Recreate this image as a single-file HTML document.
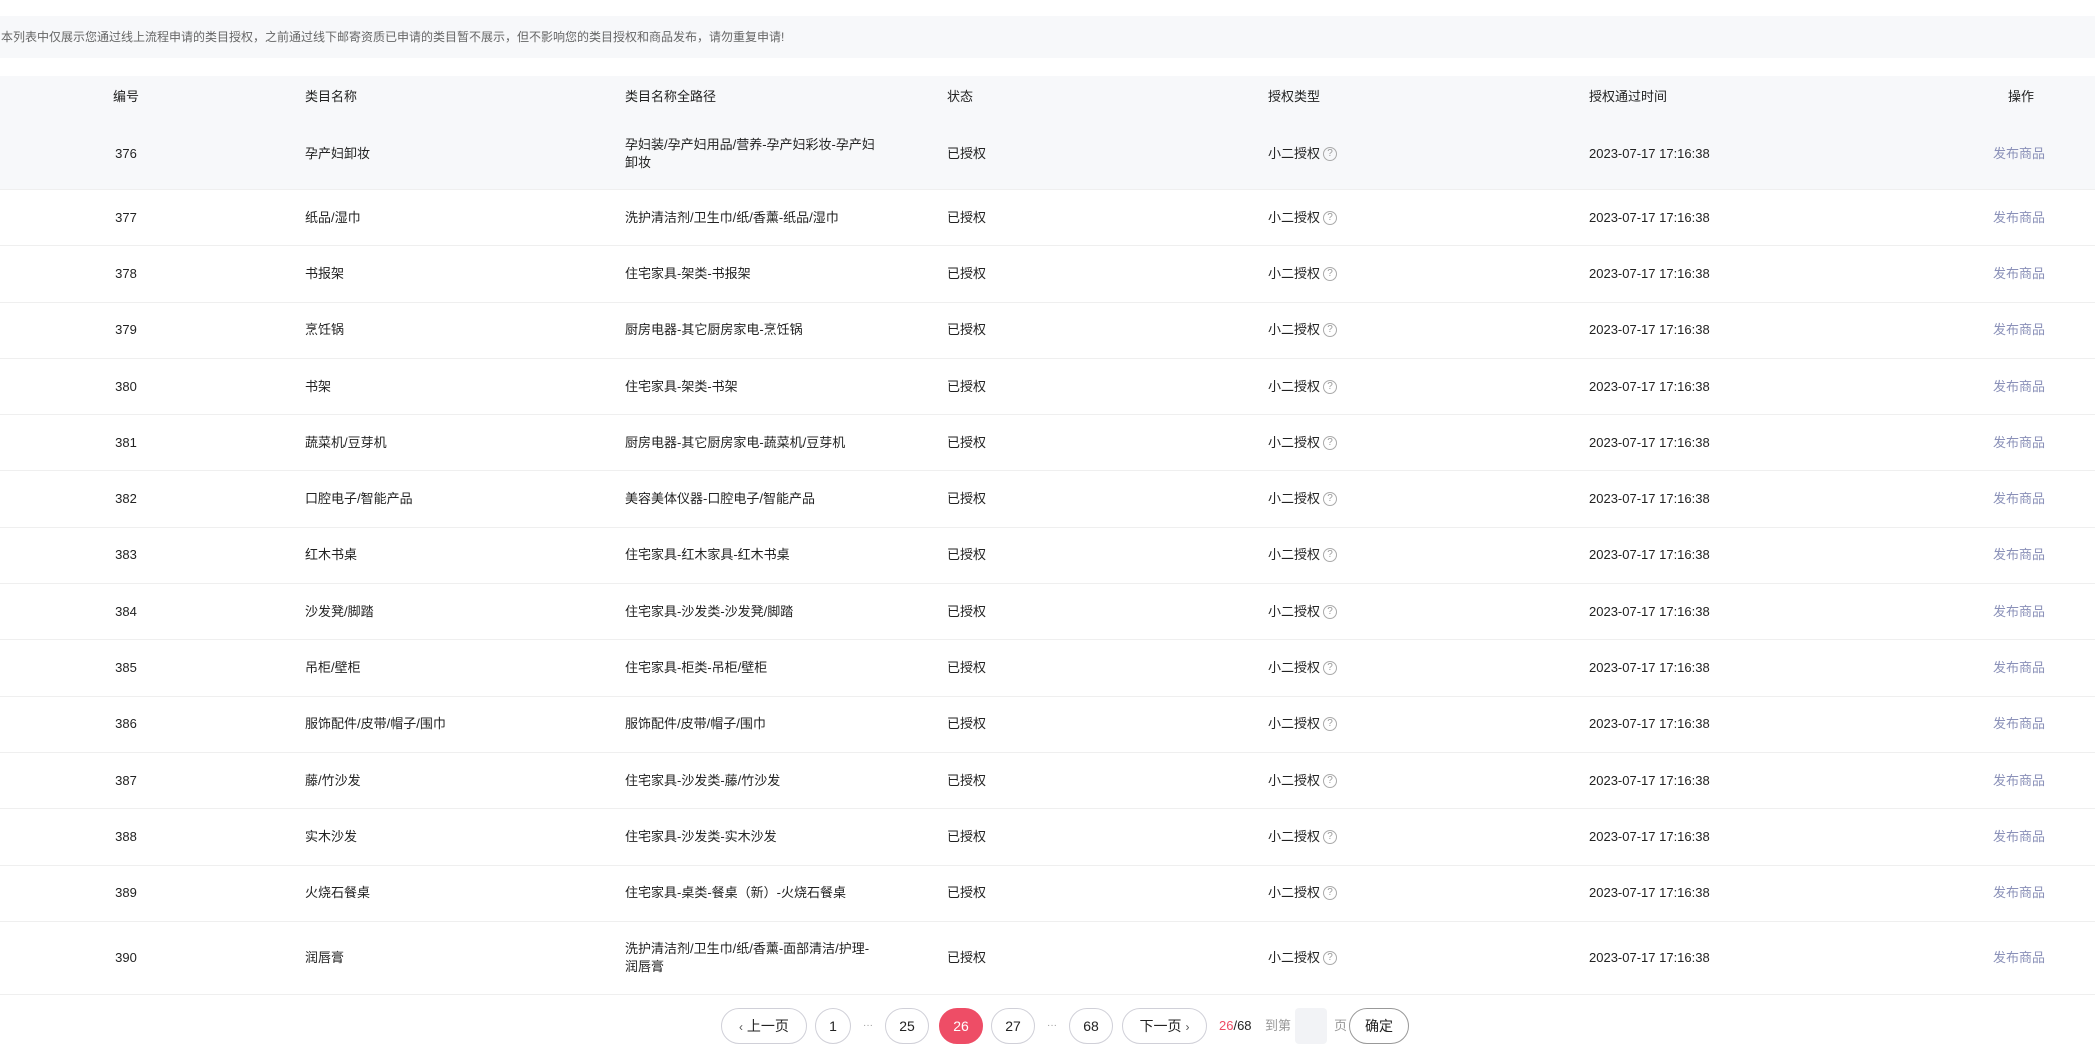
<!DOCTYPE html>
<html><head><meta charset="utf-8"><style>
*{margin:0;padding:0;box-sizing:border-box}
body{width:2095px;height:1050px;background:#fff;font-family:"Liberation Sans","Noto Sans CJK SC",sans-serif;color:#222;position:relative;overflow:hidden;font-size:13px}
.notice{position:absolute;left:0;top:16px;width:2095px;height:42px;background:#f7f8fa;font-size:12px;color:#666;line-height:42px;padding-left:1px}
.hdr{position:absolute;left:0;top:76px;width:2095px;height:42px;background:#f7f8fa}
.row{position:absolute;left:0;width:2095px;border-bottom:1px solid #efefef}
.c{position:absolute;top:50%;transform:translateY(-50%);line-height:18px;white-space:nowrap}
.n{left:96px;width:60px;text-align:center}
.a{left:305px}.b{left:625px}.s{left:947px}.t{left:1268px;display:flex;align-items:center}.d{left:1589px}
.op{left:1993px;color:#8a90b8}
.hop{left:2008px}
.q{display:inline-block;width:14px;height:14px;border:1px solid #aaa;border-radius:50%;font-size:10px;line-height:12px;text-align:center;color:#999;margin-left:3px}
.pg{position:absolute;top:1008px;height:36px;border:1px solid #d0d0d8;border-radius:18px;text-align:center;line-height:34px;font-size:14px;background:#fff}
.dots{position:absolute;top:1020px;color:#999;font-size:10px;line-height:12px}
.lbl{position:absolute;top:1017px;font-size:13px;line-height:18px}
</style></head><body>
<div class="notice">本列表中仅展示您通过线上流程申请的类目授权，之前通过线下邮寄资质已申请的类目暂不展示，但不影响您的类目授权和商品发布，请勿重复申请!</div>
<div class="hdr">
<div class="c n">编号</div><div class="c a">类目名称</div><div class="c b">类目名称全路径</div><div class="c s">状态</div><div class="c t">授权类型</div><div class="c d">授权通过时间</div><div class="c hop">操作</div>
</div>
<div class="row" style="top:118px;height:72px;background:#f7f8fa"><div class="c n">376</div><div class="c a">孕产妇卸妆</div><div class="c b">孕妇装/孕产妇用品/营养-孕产妇彩妆-孕产妇<br>卸妆</div><div class="c s">已授权</div><div class="c t">小二授权<span class="q">?</span></div><div class="c d">2023-07-17 17:16:38</div><div class="c op">发布商品</div></div>
<div class="row" style="top:190px;height:56.3px"><div class="c n">377</div><div class="c a">纸品/湿巾</div><div class="c b">洗护清洁剂/卫生巾/纸/香薰-纸品/湿巾</div><div class="c s">已授权</div><div class="c t">小二授权<span class="q">?</span></div><div class="c d">2023-07-17 17:16:38</div><div class="c op">发布商品</div></div>
<div class="row" style="top:246.3px;height:56.3px"><div class="c n">378</div><div class="c a">书报架</div><div class="c b">住宅家具-架类-书报架</div><div class="c s">已授权</div><div class="c t">小二授权<span class="q">?</span></div><div class="c d">2023-07-17 17:16:38</div><div class="c op">发布商品</div></div>
<div class="row" style="top:302.6px;height:56.3px"><div class="c n">379</div><div class="c a">烹饪锅</div><div class="c b">厨房电器-其它厨房家电-烹饪锅</div><div class="c s">已授权</div><div class="c t">小二授权<span class="q">?</span></div><div class="c d">2023-07-17 17:16:38</div><div class="c op">发布商品</div></div>
<div class="row" style="top:358.9px;height:56.3px"><div class="c n">380</div><div class="c a">书架</div><div class="c b">住宅家具-架类-书架</div><div class="c s">已授权</div><div class="c t">小二授权<span class="q">?</span></div><div class="c d">2023-07-17 17:16:38</div><div class="c op">发布商品</div></div>
<div class="row" style="top:415.2px;height:56.3px"><div class="c n">381</div><div class="c a">蔬菜机/豆芽机</div><div class="c b">厨房电器-其它厨房家电-蔬菜机/豆芽机</div><div class="c s">已授权</div><div class="c t">小二授权<span class="q">?</span></div><div class="c d">2023-07-17 17:16:38</div><div class="c op">发布商品</div></div>
<div class="row" style="top:471.5px;height:56.3px"><div class="c n">382</div><div class="c a">口腔电子/智能产品</div><div class="c b">美容美体仪器-口腔电子/智能产品</div><div class="c s">已授权</div><div class="c t">小二授权<span class="q">?</span></div><div class="c d">2023-07-17 17:16:38</div><div class="c op">发布商品</div></div>
<div class="row" style="top:527.8px;height:56.3px"><div class="c n">383</div><div class="c a">红木书桌</div><div class="c b">住宅家具-红木家具-红木书桌</div><div class="c s">已授权</div><div class="c t">小二授权<span class="q">?</span></div><div class="c d">2023-07-17 17:16:38</div><div class="c op">发布商品</div></div>
<div class="row" style="top:584.1px;height:56.3px"><div class="c n">384</div><div class="c a">沙发凳/脚踏</div><div class="c b">住宅家具-沙发类-沙发凳/脚踏</div><div class="c s">已授权</div><div class="c t">小二授权<span class="q">?</span></div><div class="c d">2023-07-17 17:16:38</div><div class="c op">发布商品</div></div>
<div class="row" style="top:640.4px;height:56.3px"><div class="c n">385</div><div class="c a">吊柜/壁柜</div><div class="c b">住宅家具-柜类-吊柜/壁柜</div><div class="c s">已授权</div><div class="c t">小二授权<span class="q">?</span></div><div class="c d">2023-07-17 17:16:38</div><div class="c op">发布商品</div></div>
<div class="row" style="top:696.7px;height:56.3px"><div class="c n">386</div><div class="c a">服饰配件/皮带/帽子/围巾</div><div class="c b">服饰配件/皮带/帽子/围巾</div><div class="c s">已授权</div><div class="c t">小二授权<span class="q">?</span></div><div class="c d">2023-07-17 17:16:38</div><div class="c op">发布商品</div></div>
<div class="row" style="top:753px;height:56.3px"><div class="c n">387</div><div class="c a">藤/竹沙发</div><div class="c b">住宅家具-沙发类-藤/竹沙发</div><div class="c s">已授权</div><div class="c t">小二授权<span class="q">?</span></div><div class="c d">2023-07-17 17:16:38</div><div class="c op">发布商品</div></div>
<div class="row" style="top:809.3px;height:56.3px"><div class="c n">388</div><div class="c a">实木沙发</div><div class="c b">住宅家具-沙发类-实木沙发</div><div class="c s">已授权</div><div class="c t">小二授权<span class="q">?</span></div><div class="c d">2023-07-17 17:16:38</div><div class="c op">发布商品</div></div>
<div class="row" style="top:865.6px;height:56.4px"><div class="c n">389</div><div class="c a">火烧石餐桌</div><div class="c b">住宅家具-桌类-餐桌（新）-火烧石餐桌</div><div class="c s">已授权</div><div class="c t">小二授权<span class="q">?</span></div><div class="c d">2023-07-17 17:16:38</div><div class="c op">发布商品</div></div>
<div class="row" style="top:922px;height:73px"><div class="c n">390</div><div class="c a">润唇膏</div><div class="c b">洗护清洁剂/卫生巾/纸/香薰-面部清洁/护理-<br>润唇膏</div><div class="c s">已授权</div><div class="c t">小二授权<span class="q">?</span></div><div class="c d">2023-07-17 17:16:38</div><div class="c op">发布商品</div></div>

<div class="pg" style="left:721px;width:86px"><span style="font-size:12px;color:#555">‹</span> 上一页</div>
<div class="pg" style="left:815px;width:36px">1</div>
<div class="dots" style="left:863px">···</div>
<div class="pg" style="left:885px;width:44px">25</div>
<div class="pg" style="left:939px;width:44px;background:#ee4d66;border-color:#ee4d66;color:#fff">26</div>
<div class="pg" style="left:991px;width:44px">27</div>
<div class="dots" style="left:1047px">···</div>
<div class="pg" style="left:1069px;width:44px">68</div>
<div class="pg" style="left:1122px;width:85px">下一页 <span style="font-size:12px;color:#555">›</span></div>
<div class="lbl" style="left:1219px"><span style="color:#ee4d66">26</span>/68</div>
<div class="lbl" style="left:1265px;color:#999">到第</div>
<div style="position:absolute;left:1295px;top:1008px;width:32px;height:36px;background:#f2f3f6;border-radius:4px"></div>
<div class="lbl" style="left:1334px;color:#999">页</div>
<div class="pg" style="left:1349px;width:60px;border-color:#999">确定</div>
</body></html>
